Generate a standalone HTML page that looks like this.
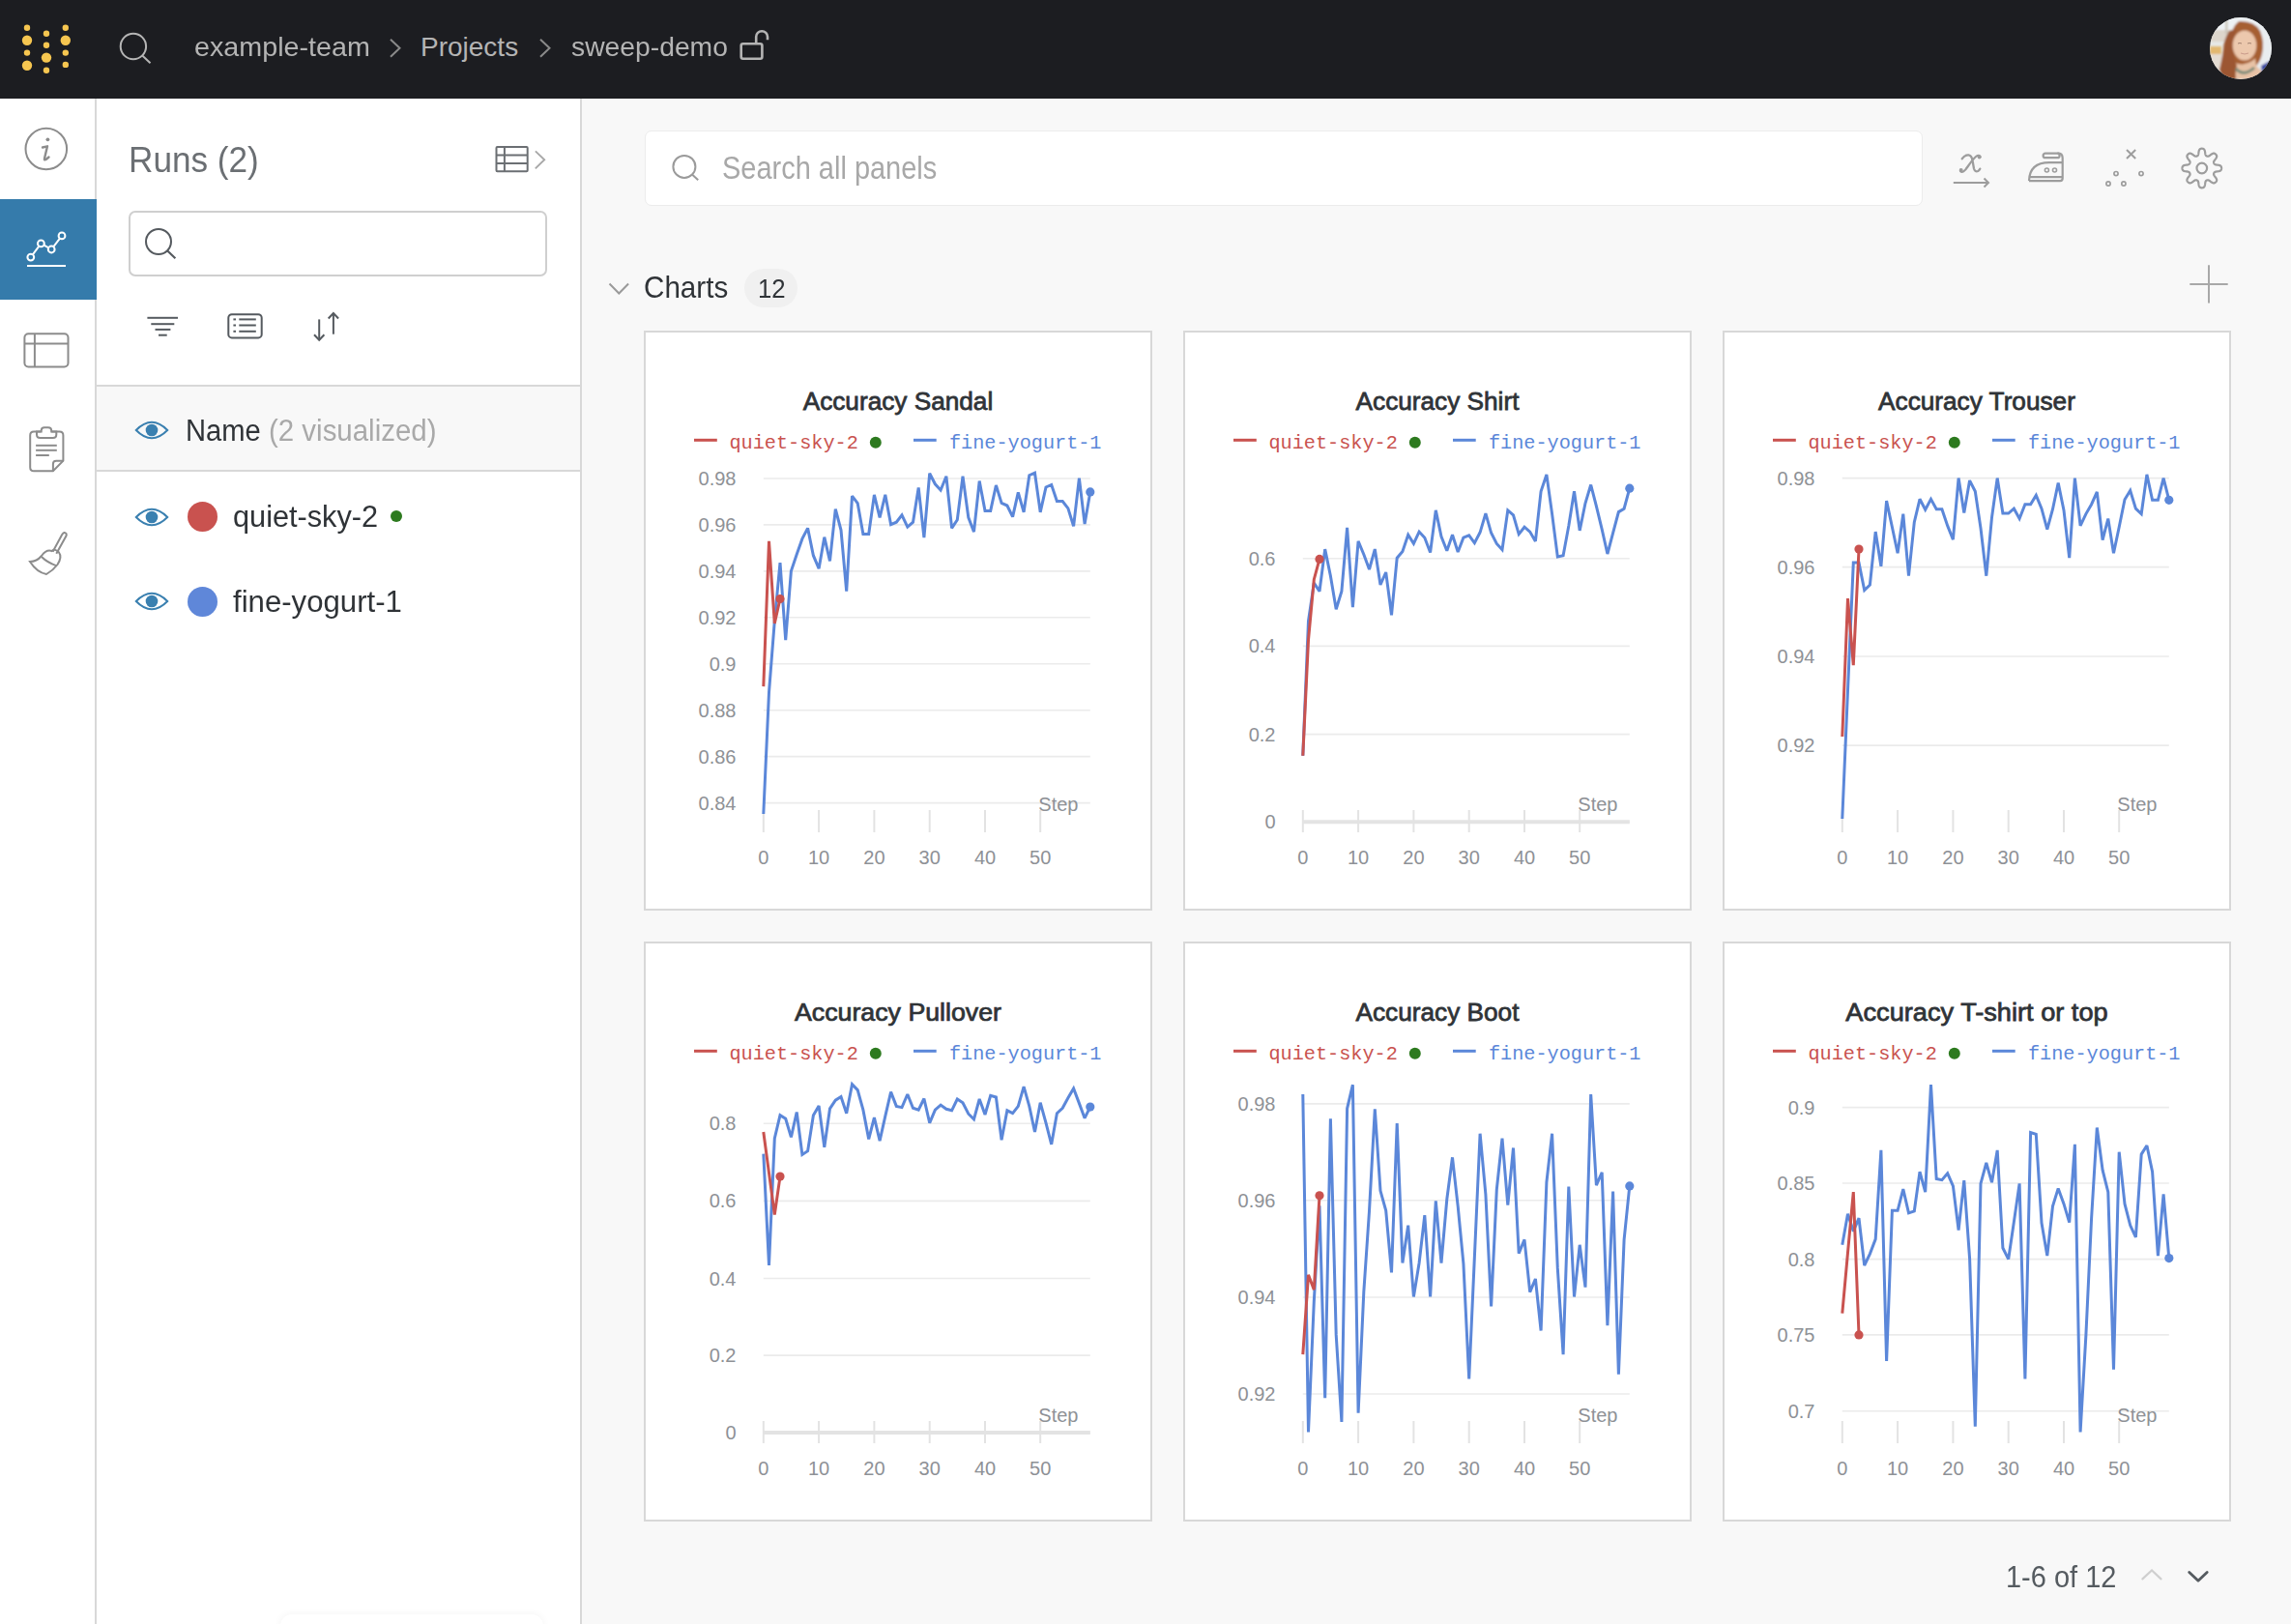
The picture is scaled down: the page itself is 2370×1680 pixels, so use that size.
<!DOCTYPE html>
<html><head><meta charset="utf-8"><style>
html,body{margin:0;padding:0;}
body{width:2370px;height:1680px;position:relative;overflow:hidden;background:#f8f8f8;font-family:"Liberation Sans", sans-serif;}
</style></head><body>
<div style="position:absolute;left:0;top:0;width:2370px;height:102px;background:#1c1d21"></div>
<svg style="position:absolute;left:0;top:0" width="100" height="102"><circle cx="28" cy="28.8" r="3.2" fill="#f6c650"/><circle cx="28" cy="41.8" r="5.2" fill="#f6c650"/><circle cx="28" cy="54.6" r="3.2" fill="#f6c650"/><circle cx="28" cy="67.8" r="5.2" fill="#f6c650"/><circle cx="48" cy="34.8" r="3.2" fill="#f6c650"/><circle cx="48" cy="46.7" r="3.2" fill="#f6c650"/><circle cx="48" cy="59.6" r="5.2" fill="#f6c650"/><circle cx="48" cy="72.8" r="3.2" fill="#f6c650"/><circle cx="67.8" cy="28.8" r="3.2" fill="#f6c650"/><circle cx="67.8" cy="41.8" r="5.2" fill="#f6c650"/><circle cx="67.8" cy="54.6" r="3.2" fill="#f6c650"/><circle cx="67.8" cy="66.9" r="3.2" fill="#f6c650"/></svg>
<svg style="position:absolute;left:110px;top:20px" width="60" height="60"><circle cx="27.9" cy="28" r="13.2" fill="none" stroke="#b5b5b5" stroke-width="2"/><line x1="37.5" y1="37.8" x2="45.5" y2="45.2" stroke="#b5b5b5" stroke-width="2"/></svg>
<div style="position:absolute;left:200.5px;top:34.6px;font-family:'Liberation Sans', sans-serif;font-size:28px;line-height:1;color:#b4b4b4;font-weight:400;white-space:pre;transform:scaleX(1.025);transform-origin:left top;">example-team</div>
<svg style="position:absolute;left:400px;top:36px" width="20" height="26"><polyline points="4,4.7 13.5,13.7 4,22.7" fill="none" stroke="#8a8a8a" stroke-width="2"/></svg>
<div style="position:absolute;left:435px;top:34.6px;font-family:'Liberation Sans', sans-serif;font-size:28px;line-height:1;color:#b4b4b4;font-weight:400;white-space:pre;">Projects</div>
<svg style="position:absolute;left:555px;top:36px" width="20" height="26"><polyline points="4,4.7 13.5,13.7 4,22.7" fill="none" stroke="#8a8a8a" stroke-width="2"/></svg>
<div style="position:absolute;left:590.5px;top:34.6px;font-family:'Liberation Sans', sans-serif;font-size:28px;line-height:1;color:#b4b4b4;font-weight:400;white-space:pre;transform:scaleX(1.01);transform-origin:left top;">sweep-demo</div>
<svg style="position:absolute;left:760px;top:28px" width="40" height="40"><rect x="6.7" y="17.3" width="21.7" height="15.4" rx="2" fill="none" stroke="#b4b4b4" stroke-width="2.6"/><path d="M22.2 17.3 V10.1 A5.9 5.9 0 0 1 34 10.1 V13.2" fill="none" stroke="#b4b4b4" stroke-width="2.6"/></svg>
<svg style="position:absolute;left:2286px;top:18px" width="64" height="64"><defs><clipPath id="avc"><circle cx="32" cy="32" r="32"/></clipPath><filter id="avb" x="-20%" y="-20%" width="140%" height="140%"><feGaussianBlur stdDeviation="1"/></filter></defs><g clip-path="url(#avc)"><rect width="64" height="64" fill="#e6e8e6"/><g filter="url(#avb)"><rect x="0" y="0" width="64" height="18" fill="#eef2f5"/><rect x="0" y="13" width="22" height="12" fill="#ddd6cc"/><rect x="0" y="30" width="12" height="8" fill="#e2b870"/><rect x="0" y="38" width="16" height="26" fill="#e4dcd2"/><rect x="48" y="8" width="16" height="50" fill="#e9edf0"/><rect x="16" y="3" width="2.5" height="14" fill="#c9c3b8"/><path d="M30 4 Q46 3 52 14 Q57 26 54 38 Q52 46 48 50 L40 52 L24 52 Q18 40 20 28 Q22 10 30 4 Z" fill="#a65f33"/><path d="M22 44 Q30 50 36 48 Q44 46 47 42 L48 50 Q54 56 58 60 L58 64 L22 64 Z" fill="#e8c2a6"/><path d="M20 14 Q14 24 14 34 Q12 46 10 54 Q12 62 18 64 L27 64 Q26 56 28 50 Q24 40 24 30 Q24 20 28 12 Z" fill="#9c5630"/><ellipse cx="36" cy="29" rx="12.3" ry="15.5" fill="#ecc8ad"/><path d="M27 53 Q35 62 46 52" fill="none" stroke="#7a8a78" stroke-width="3"/><path d="M53 50 L64 44 L64 64 L55 64 Z" fill="#3a4aa0"/></g><path d="M29 27 Q31 26 33 27 M39 27 Q41 26 43 27" stroke="#9a7a6a" stroke-width="0.9" fill="none"/><path d="M32 37 Q36 39 40 37" stroke="#c99a8a" stroke-width="1" fill="none"/></g></svg>
<div style="position:absolute;left:0;top:102px;width:98px;height:1578px;background:#fff;border-right:2px solid #d8d8d8"></div>
<div style="position:absolute;left:0;top:206px;width:100px;height:104px;background:#357bab"></div>
<svg style="position:absolute;left:0;top:102px" width="98" height="104"><circle cx="47.8" cy="52" r="21.3" fill="none" stroke="#8c8c8c" stroke-width="2"/><circle cx="49.4" cy="42.3" r="1.9" fill="#8c8c8c"/><path d="M44 50.5 L49 49.3 L46 62 Q45.5 64.2 47.8 62.8 L50.5 60.5" fill="none" stroke="#8c8c8c" stroke-width="2.4" stroke-linejoin="round" stroke-linecap="round"/></svg>
<svg style="position:absolute;left:0;top:206px" width="100" height="104"><polyline points="31.8,60.1 42.4,45.9 53.2,52 64,37.9" fill="none" stroke="#fff" stroke-width="2"/><circle cx="31.8" cy="60.1" r="3.4" fill="#357bab" stroke="#fff" stroke-width="2"/><circle cx="42.4" cy="45.9" r="3.4" fill="#357bab" stroke="#fff" stroke-width="2"/><circle cx="53.2" cy="52" r="3.4" fill="#357bab" stroke="#fff" stroke-width="2"/><circle cx="64" cy="37.9" r="3.4" fill="#357bab" stroke="#fff" stroke-width="2"/><line x1="28" y1="69" x2="68" y2="69" stroke="#fff" stroke-width="2"/></svg>
<svg style="position:absolute;left:0;top:330px" width="98" height="70"><rect x="25.4" y="15.2" width="45.1" height="34.2" rx="4" fill="none" stroke="#8c8c8c" stroke-width="2"/><line x1="25.4" y1="25.5" x2="70.5" y2="25.5" stroke="#8c8c8c" stroke-width="2"/><line x1="35.9" y1="15.2" x2="35.9" y2="49.4" stroke="#8c8c8c" stroke-width="2"/></svg>
<svg style="position:absolute;left:0;top:430px" width="98" height="70"><path d="M42.5 16.6 H35 Q31.2 16.6 31.2 20.4 V53.4 Q31.2 57.2 35 57.2 H54.9 L65.4 46.7 V20.4 Q65.4 16.6 61.6 16.6 H53.2" fill="none" stroke="#8c8c8c" stroke-width="2"/><path d="M38 16.6 V19.5 Q38 23 41.5 23 H54.8 Q58.3 23 58.3 19.5 V16.6 H53.2 V15.5 Q53.2 12.2 49.9 12.2 H46 Q42.7 12.2 42.7 15.5 V16.6 Z" fill="none" stroke="#8c8c8c" stroke-width="2"/><line x1="37.1" y1="30.8" x2="58.8" y2="30.8" stroke="#8c8c8c" stroke-width="2"/><line x1="37.1" y1="35.8" x2="58.8" y2="35.8" stroke="#8c8c8c" stroke-width="2"/><line x1="37.1" y1="41" x2="50.8" y2="41" stroke="#8c8c8c" stroke-width="2"/><path d="M54.9 57.2 V50 Q54.9 46.7 58.2 46.7 H65.4" fill="none" stroke="#8c8c8c" stroke-width="2"/></svg>
<svg style="position:absolute;left:0;top:522px" width="98" height="80"><path d="M54.6 48.8 L64.2 31 Q66.5 27.6 68.6 30.2 Q69 31.5 68.4 32.6 L58.3 50.8" fill="none" stroke="#8c8c8c" stroke-width="2"/><path d="M53.7 48 Q57 45 61 49.5 Q64.5 54 59.5 62 Q55 68 48 72 Q38 70 31 59 Q38 59 43 53 Q48 46 53.7 48 Z" fill="none" stroke="#8c8c8c" stroke-width="2"/><path d="M43 54 Q49 60 58.8 63.4" fill="none" stroke="#8c8c8c" stroke-width="2"/></svg>
<div style="position:absolute;left:100px;top:102px;width:500px;height:1578px;background:#fff;border-right:2px solid #d8d8d8"></div>
<div style="position:absolute;left:132.5px;top:147.2px;font-family:'Liberation Sans', sans-serif;font-size:37px;line-height:1;color:#6b6f73;font-weight:400;white-space:pre;transform:scaleX(0.95);transform-origin:left top;">Runs (2)</div>
<svg style="position:absolute;left:505px;top:145px" width="70" height="40"><rect x="8.5" y="7.1" width="32.2" height="25.2" rx="1" fill="none" stroke="#6b6f73" stroke-width="2"/><line x1="8.5" y1="15.4" x2="40.7" y2="15.4" stroke="#6b6f73" stroke-width="2"/><line x1="8.5" y1="24.1" x2="40.7" y2="24.1" stroke="#6b6f73" stroke-width="2"/><line x1="16.9" y1="7.1" x2="16.9" y2="32.3" stroke="#6b6f73" stroke-width="2"/><polyline points="48.9,11.4 58.2,20.3 48.8,29.4" fill="none" stroke="#a8a8a8" stroke-width="1.9"/></svg>
<div style="position:absolute;left:132.5px;top:218px;width:429px;height:63.5px;border:2px solid #cfcfcf;border-radius:7px;background:#fff"></div>
<svg style="position:absolute;left:140px;top:225px" width="60" height="60"><circle cx="24" cy="25" r="13" fill="none" stroke="#555a5f" stroke-width="2"/><line x1="33.3" y1="34.5" x2="41.4" y2="42.3" stroke="#555a5f" stroke-width="2.2"/></svg>
<svg style="position:absolute;left:140px;top:315px" width="60" height="40"><line x1="12.4" y1="13.8" x2="44" y2="13.8" stroke="#555a5f" stroke-width="2"/><line x1="16.3" y1="20.2" x2="40.3" y2="20.2" stroke="#555a5f" stroke-width="2"/><line x1="20.5" y1="25.9" x2="36.4" y2="25.9" stroke="#555a5f" stroke-width="2"/><line x1="24" y1="31.7" x2="32.7" y2="31.7" stroke="#555a5f" stroke-width="2"/></svg>
<svg style="position:absolute;left:225px;top:315px" width="60" height="40"><rect x="11.3" y="10.3" width="34.4" height="24.1" rx="3.5" fill="none" stroke="#555a5f" stroke-width="2"/><line x1="16.4" y1="15.4" x2="19" y2="15.4" stroke="#555a5f" stroke-width="2"/><line x1="22.3" y1="15.4" x2="39.8" y2="15.4" stroke="#555a5f" stroke-width="2"/><line x1="16.4" y1="21.5" x2="19" y2="21.5" stroke="#555a5f" stroke-width="2"/><line x1="22.3" y1="21.5" x2="39.8" y2="21.5" stroke="#555a5f" stroke-width="2"/><line x1="16.4" y1="27.8" x2="19" y2="27.8" stroke="#555a5f" stroke-width="2"/><line x1="22.3" y1="27.8" x2="39.8" y2="27.8" stroke="#555a5f" stroke-width="2"/></svg>
<svg style="position:absolute;left:310px;top:315px" width="50" height="45"><line x1="20.2" y1="15.4" x2="20.2" y2="36.5" stroke="#555a5f" stroke-width="2"/><polyline points="15,31.3 20.2,36.8 25.4,31.3" fill="none" stroke="#555a5f" stroke-width="2"/><line x1="34.9" y1="9.3" x2="34.9" y2="30.7" stroke="#555a5f" stroke-width="2"/><polyline points="29.7,14.5 34.9,9 40.1,14.5" fill="none" stroke="#555a5f" stroke-width="2"/></svg>
<div style="position:absolute;left:100px;top:398px;width:500px;height:86px;background:#f8f8f8;border-top:2px solid #d8d8d8;border-bottom:2px solid #d8d8d8"></div>
<svg style="position:absolute;left:137.2px;top:430.8px" width="40" height="28"><path d="M3.8 14 Q20 -2.5 36.2 14 Q20 30.5 3.8 14 Z" fill="none" stroke="#3a80b0" stroke-width="2"/><circle cx="20" cy="14" r="6.3" fill="#3a80b0"/></svg>
<div style="position:absolute;left:192px;top:430.1px;font-family:'Liberation Sans', sans-serif;font-size:31px;line-height:1;color:#2f3337;font-weight:400;white-space:pre;transform:scaleX(0.94);transform-origin:left top;">Name</div>
<div style="position:absolute;left:278px;top:430.1px;font-family:'Liberation Sans', sans-serif;font-size:31px;line-height:1;color:#a9a9a9;font-weight:400;white-space:pre;transform:scaleX(0.95);transform-origin:left top;">(2 visualized)</div>
<svg style="position:absolute;left:137.2px;top:520.5px" width="40" height="28"><path d="M3.8 14 Q20 -2.5 36.2 14 Q20 30.5 3.8 14 Z" fill="none" stroke="#3a80b0" stroke-width="2"/><circle cx="20" cy="14" r="6.3" fill="#3a80b0"/></svg>
<div style="position:absolute;left:194px;top:518.5px;width:31px;height:31px;border-radius:50%;background:#c9524f"></div>
<div style="position:absolute;left:241px;top:519.3px;font-family:'Liberation Sans', sans-serif;font-size:31px;line-height:1;color:#2f3337;font-weight:400;white-space:pre;transform:scaleX(0.99);transform-origin:left top;">quiet-sky-2</div>
<div style="position:absolute;left:404px;top:528px;width:12px;height:12px;border-radius:50%;background:#2d7a1f"></div>
<svg style="position:absolute;left:137.2px;top:608.3px" width="40" height="28"><path d="M3.8 14 Q20 -2.5 36.2 14 Q20 30.5 3.8 14 Z" fill="none" stroke="#3a80b0" stroke-width="2"/><circle cx="20" cy="14" r="6.3" fill="#3a80b0"/></svg>
<div style="position:absolute;left:194px;top:606.5px;width:31px;height:31px;border-radius:50%;background:#5f87d9"></div>
<div style="position:absolute;left:241px;top:607.1px;font-family:'Liberation Sans', sans-serif;font-size:31px;line-height:1;color:#2f3337;font-weight:400;white-space:pre;transform:scaleX(1.005);transform-origin:left top;">fine-yogurt-1</div>
<div style="position:absolute;left:290px;top:1670px;width:272px;height:40px;border-radius:12px;background:#fff;box-shadow:0 0 8px rgba(0,0,0,0.05)"></div>
<div style="position:absolute;left:667px;top:135px;width:1320px;height:76px;border:1px solid #ececec;border-radius:7px;background:#fff"></div>
<svg style="position:absolute;left:680px;top:145px" width="60" height="60"><circle cx="27.9" cy="27.4" r="11.5" fill="none" stroke="#9a9a9a" stroke-width="2"/><line x1="36" y1="35.6" x2="42.2" y2="41.2" stroke="#9a9a9a" stroke-width="2"/></svg>
<div style="position:absolute;left:747px;top:156.7px;font-family:'Liberation Sans', sans-serif;font-size:33px;line-height:1;color:#a8a8a8;font-weight:400;white-space:pre;transform:scaleX(0.878);transform-origin:left top;">Search all panels</div>
<svg style="position:absolute;left:2010px;top:145px" width="60" height="55"><path d="M19.8 19.2 Q22.5 15 26.5 15.3 Q29.8 15.8 30.6 21.5 L32 29.5 Q33.2 33.2 36.2 32 Q37.6 31.2 38.3 29.6" fill="none" stroke="#9d9d9d" stroke-width="2.3" stroke-linecap="round"/><path d="M38.6 17.4 Q38 15.2 35.6 16 Q32.6 17.2 25.5 27.5 Q22 32.6 19.8 32.8 Q17.6 32.8 18 30.6" fill="none" stroke="#9d9d9d" stroke-width="2.3" stroke-linecap="round"/><circle cx="37.6" cy="17.6" r="1.9" fill="#9d9d9d"/><circle cx="18.8" cy="31" r="1.9" fill="#9d9d9d"/><line x1="10.8" y1="44" x2="47" y2="44" stroke="#9d9d9d" stroke-width="2"/><polyline points="42.5,39.5 47,44 42.5,48.5" fill="none" stroke="#9d9d9d" stroke-width="2"/></svg>
<svg style="position:absolute;left:2090px;top:150px" width="60" height="45"><path d="M9 37.1 Q9.5 18.2 30 18.2 H43.7" fill="none" stroke="#9d9d9d" stroke-width="2.2"/><path d="M9 37.1 H41.2 Q43.7 37.1 43.7 34.6 V13.5 Q43.7 8.3 38.5 8.3" fill="none" stroke="#9d9d9d" stroke-width="2.2"/><line x1="10" y1="33.2" x2="43.7" y2="33.2" stroke="#9d9d9d" stroke-width="2.2"/><rect x="23.6" y="8.6" width="17" height="4.6" rx="2.3" fill="none" stroke="#9d9d9d" stroke-width="2.2"/><circle cx="27.4" cy="26" r="2" fill="none" stroke="#9d9d9d" stroke-width="1.6"/><circle cx="35.5" cy="26" r="2" fill="none" stroke="#9d9d9d" stroke-width="1.6"/></svg>
<svg style="position:absolute;left:2170px;top:145px" width="60" height="55"><line x1="30" y1="10" x2="39.2" y2="19" stroke="#9d9d9d" stroke-width="2"/><line x1="39.2" y1="10" x2="30" y2="19" stroke="#9d9d9d" stroke-width="2"/><circle cx="11" cy="45" r="2.1" fill="none" stroke="#9d9d9d" stroke-width="1.7"/><circle cx="19" cy="34.6" r="2.1" fill="none" stroke="#9d9d9d" stroke-width="1.7"/><circle cx="26.9" cy="45" r="2.1" fill="none" stroke="#9d9d9d" stroke-width="1.7"/><circle cx="45" cy="34.6" r="2.1" fill="none" stroke="#9d9d9d" stroke-width="1.7"/></svg>
<svg style="position:absolute;left:2250px;top:145px" width="60" height="60"><path d="M27.80 8.70 L28.12 8.71 L28.44 8.74 L28.75 8.79 L29.07 8.87 L29.37 8.99 L29.68 9.15 L29.97 9.38 L30.24 9.69 L30.49 10.11 L30.71 10.64 L30.89 11.29 L31.04 12.04 L31.15 12.81 L31.25 13.56 L31.35 14.21 L31.46 14.75 L31.58 15.17 L31.72 15.50 L31.88 15.75 L32.04 15.95 L32.22 16.10 L32.40 16.23 L32.58 16.34 L32.77 16.44 L32.97 16.53 L33.16 16.60 L33.37 16.67 L33.58 16.72 L33.80 16.76 L34.03 16.77 L34.29 16.75 L34.57 16.68 L34.90 16.55 L35.29 16.33 L35.75 16.03 L36.28 15.64 L36.88 15.18 L37.51 14.72 L38.14 14.29 L38.73 13.96 L39.26 13.74 L39.73 13.62 L40.14 13.59 L40.51 13.64 L40.84 13.74 L41.14 13.87 L41.42 14.04 L41.68 14.22 L41.92 14.43 L42.15 14.65 L42.37 14.88 L42.58 15.12 L42.76 15.38 L42.93 15.66 L43.06 15.96 L43.16 16.29 L43.21 16.66 L43.18 17.07 L43.06 17.54 L42.84 18.07 L42.51 18.66 L42.08 19.29 L41.62 19.92 L41.16 20.52 L40.77 21.05 L40.47 21.51 L40.25 21.90 L40.12 22.23 L40.05 22.51 L40.03 22.77 L40.04 23.00 L40.08 23.22 L40.13 23.43 L40.20 23.64 L40.27 23.83 L40.36 24.03 L40.46 24.22 L40.57 24.40 L40.70 24.58 L40.85 24.76 L41.05 24.92 L41.30 25.08 L41.63 25.22 L42.05 25.34 L42.59 25.45 L43.24 25.55 L43.99 25.65 L44.76 25.76 L45.51 25.91 L46.16 26.09 L46.69 26.31 L47.11 26.56 L47.42 26.83 L47.65 27.12 L47.81 27.43 L47.93 27.73 L48.01 28.05 L48.06 28.36 L48.09 28.68 L48.10 29.00 L48.09 29.32 L48.06 29.64 L48.01 29.95 L47.93 30.27 L47.81 30.57 L47.65 30.88 L47.42 31.17 L47.11 31.44 L46.69 31.69 L46.16 31.91 L45.51 32.09 L44.76 32.24 L43.99 32.35 L43.24 32.45 L42.59 32.55 L42.05 32.66 L41.63 32.78 L41.30 32.92 L41.05 33.08 L40.85 33.24 L40.70 33.42 L40.57 33.60 L40.46 33.78 L40.36 33.97 L40.27 34.17 L40.20 34.36 L40.13 34.57 L40.08 34.78 L40.04 35.00 L40.03 35.23 L40.05 35.49 L40.12 35.77 L40.25 36.10 L40.47 36.49 L40.77 36.95 L41.16 37.48 L41.62 38.08 L42.08 38.71 L42.51 39.34 L42.84 39.93 L43.06 40.46 L43.18 40.93 L43.21 41.34 L43.16 41.71 L43.06 42.04 L42.93 42.34 L42.76 42.62 L42.58 42.88 L42.37 43.12 L42.15 43.35 L41.92 43.57 L41.68 43.78 L41.42 43.96 L41.14 44.13 L40.84 44.26 L40.51 44.36 L40.14 44.41 L39.73 44.38 L39.26 44.26 L38.73 44.04 L38.14 43.71 L37.51 43.28 L36.88 42.82 L36.28 42.36 L35.75 41.97 L35.29 41.67 L34.90 41.45 L34.57 41.32 L34.29 41.25 L34.03 41.23 L33.80 41.24 L33.58 41.28 L33.37 41.33 L33.16 41.40 L32.97 41.47 L32.77 41.56 L32.58 41.66 L32.40 41.77 L32.22 41.90 L32.04 42.05 L31.88 42.25 L31.72 42.50 L31.58 42.83 L31.46 43.25 L31.35 43.79 L31.25 44.44 L31.15 45.19 L31.04 45.96 L30.89 46.71 L30.71 47.36 L30.49 47.89 L30.24 48.31 L29.97 48.62 L29.68 48.85 L29.37 49.01 L29.07 49.13 L28.75 49.21 L28.44 49.26 L28.12 49.29 L27.80 49.30 L27.48 49.29 L27.16 49.26 L26.85 49.21 L26.53 49.13 L26.23 49.01 L25.92 48.85 L25.63 48.62 L25.36 48.31 L25.11 47.89 L24.89 47.36 L24.71 46.71 L24.56 45.96 L24.45 45.19 L24.35 44.44 L24.25 43.79 L24.14 43.25 L24.02 42.83 L23.88 42.50 L23.72 42.25 L23.56 42.05 L23.38 41.90 L23.20 41.77 L23.02 41.66 L22.83 41.56 L22.63 41.47 L22.44 41.40 L22.23 41.33 L22.02 41.28 L21.80 41.24 L21.57 41.23 L21.31 41.25 L21.03 41.32 L20.70 41.45 L20.31 41.67 L19.85 41.97 L19.32 42.36 L18.72 42.82 L18.09 43.28 L17.46 43.71 L16.87 44.04 L16.34 44.26 L15.87 44.38 L15.46 44.41 L15.09 44.36 L14.76 44.26 L14.46 44.13 L14.18 43.96 L13.92 43.78 L13.68 43.57 L13.45 43.35 L13.23 43.12 L13.02 42.88 L12.84 42.62 L12.67 42.34 L12.54 42.04 L12.44 41.71 L12.39 41.34 L12.42 40.93 L12.54 40.46 L12.76 39.93 L13.09 39.34 L13.52 38.71 L13.98 38.08 L14.44 37.48 L14.83 36.95 L15.13 36.49 L15.35 36.10 L15.48 35.77 L15.55 35.49 L15.57 35.23 L15.56 35.00 L15.52 34.78 L15.47 34.57 L15.40 34.36 L15.33 34.17 L15.24 33.97 L15.14 33.78 L15.03 33.60 L14.90 33.42 L14.75 33.24 L14.55 33.08 L14.30 32.92 L13.97 32.78 L13.55 32.66 L13.01 32.55 L12.36 32.45 L11.61 32.35 L10.84 32.24 L10.09 32.09 L9.44 31.91 L8.91 31.69 L8.49 31.44 L8.18 31.17 L7.95 30.88 L7.79 30.57 L7.67 30.27 L7.59 29.95 L7.54 29.64 L7.51 29.32 L7.50 29.00 L7.51 28.68 L7.54 28.36 L7.59 28.05 L7.67 27.73 L7.79 27.43 L7.95 27.12 L8.18 26.83 L8.49 26.56 L8.91 26.31 L9.44 26.09 L10.09 25.91 L10.84 25.76 L11.61 25.65 L12.36 25.55 L13.01 25.45 L13.55 25.34 L13.97 25.22 L14.30 25.08 L14.55 24.92 L14.75 24.76 L14.90 24.58 L15.03 24.40 L15.14 24.22 L15.24 24.03 L15.33 23.83 L15.40 23.64 L15.47 23.43 L15.52 23.22 L15.56 23.00 L15.57 22.77 L15.55 22.51 L15.48 22.23 L15.35 21.90 L15.13 21.51 L14.83 21.05 L14.44 20.52 L13.98 19.92 L13.52 19.29 L13.09 18.66 L12.76 18.07 L12.54 17.54 L12.42 17.07 L12.39 16.66 L12.44 16.29 L12.54 15.96 L12.67 15.66 L12.84 15.38 L13.02 15.12 L13.23 14.88 L13.45 14.65 L13.68 14.43 L13.92 14.22 L14.18 14.04 L14.46 13.87 L14.76 13.74 L15.09 13.64 L15.46 13.59 L15.87 13.62 L16.34 13.74 L16.87 13.96 L17.46 14.29 L18.09 14.72 L18.72 15.18 L19.32 15.64 L19.85 16.03 L20.31 16.33 L20.70 16.55 L21.03 16.68 L21.31 16.75 L21.57 16.77 L21.80 16.76 L22.02 16.72 L22.23 16.67 L22.44 16.60 L22.63 16.53 L22.83 16.44 L23.02 16.34 L23.20 16.23 L23.38 16.10 L23.56 15.95 L23.72 15.75 L23.88 15.50 L24.02 15.17 L24.14 14.75 L24.25 14.21 L24.35 13.56 L24.45 12.81 L24.56 12.04 L24.71 11.29 L24.89 10.64 L25.11 10.11 L25.36 9.69 L25.63 9.38 L25.92 9.15 L26.23 8.99 L26.53 8.87 L26.85 8.79 L27.16 8.74 L27.48 8.71 Z" fill="none" stroke="#9d9d9d" stroke-width="2.2" stroke-linejoin="round"/><circle cx="27.800000000000182" cy="29" r="5.3" fill="none" stroke="#9d9d9d" stroke-width="2.2"/></svg>
<svg style="position:absolute;left:625px;top:285px" width="30" height="30"><polyline points="5.5,8.5 15.3,18.5 25.1,8.5" fill="none" stroke="#9a9a9a" stroke-width="2"/></svg>
<div style="position:absolute;left:666px;top:280.9px;font-family:'Liberation Sans', sans-serif;font-size:32px;line-height:1;color:#2f3337;font-weight:400;white-space:pre;transform:scaleX(0.925);transform-origin:left top;">Charts</div>
<div style="position:absolute;left:770px;top:278px;width:55px;height:40px;border-radius:20px;background:#f0f0f0"></div>
<div style="position:absolute;left:784px;top:285.3px;font-family:'Liberation Sans', sans-serif;font-size:28px;line-height:1;color:#2f3337;font-weight:400;white-space:pre;transform:scaleX(0.92);transform-origin:left top;">12</div>
<svg style="position:absolute;left:2260px;top:270px" width="50" height="50"><line x1="5.3" y1="24" x2="44.7" y2="24" stroke="#a8a8a8" stroke-width="2"/><line x1="25" y1="4.3" x2="25" y2="43.4" stroke="#a8a8a8" stroke-width="2"/></svg>
<div style="position:absolute;left:2075px;top:1616.4px;font-family:'Liberation Sans', sans-serif;font-size:30.5px;line-height:1;color:#555b60;font-weight:400;white-space:pre;transform:scaleX(0.95);transform-origin:left top;">1-6 of 12</div>
<svg style="position:absolute;left:2205px;top:1610px" width="100" height="40"><polyline points="11.4,23.4 21,14.4 30.5,23.4" fill="none" stroke="#cfcfcf" stroke-width="2.2" stroke-linecap="round"/><polyline points="59.7,16.4 69,25.3 78.2,16.4" fill="none" stroke="#555b60" stroke-width="2.8" stroke-linecap="round" stroke-linejoin="round"/></svg>
<div style="position:absolute;left:666px;top:342px;width:522px;height:596px;border:2px solid #d8d8d8;background:#fff"></div>
<svg style="position:absolute;left:666px;top:342px" width="526" height="600"><text x="263" y="81.8" text-anchor="middle" font-family="Liberation Sans" font-weight="400" font-size="25.7" fill="#2f3337" stroke="#2f3337" stroke-width="0.75" transform="translate(263 0) scale(1.02 1) translate(-263 0)">Accuracy Sandal</text><line x1="52" y1="113.3" x2="75.8" y2="113.3" stroke="#c9524f" stroke-width="3"/><text x="88.5" y="121.9" font-family="Liberation Mono" font-size="20.2" fill="#c9524f">quiet-sky-2</text><circle cx="239.8" cy="115.7" r="6" fill="#2d7a1f"/><line x1="279" y1="113.3" x2="302.7" y2="113.3" stroke="#5b87d9" stroke-width="3"/><text x="316" y="121.9" font-family="Liberation Mono" font-size="20.2" fill="#5b87d9">fine-yogurt-1</text><line x1="123.8" y1="153" x2="461.8" y2="153" stroke="#ebebeb" stroke-width="1.6"/><text x="95.5" y="160" text-anchor="end" font-family="Liberation Sans" font-size="20" fill="#8e9196">0.98</text><line x1="123.8" y1="200.9" x2="461.8" y2="200.9" stroke="#ebebeb" stroke-width="1.6"/><text x="95.5" y="207.9" text-anchor="end" font-family="Liberation Sans" font-size="20" fill="#8e9196">0.96</text><line x1="123.8" y1="248.9" x2="461.8" y2="248.9" stroke="#ebebeb" stroke-width="1.6"/><text x="95.5" y="255.9" text-anchor="end" font-family="Liberation Sans" font-size="20" fill="#8e9196">0.94</text><line x1="123.8" y1="296.8" x2="461.8" y2="296.8" stroke="#ebebeb" stroke-width="1.6"/><text x="95.5" y="303.8" text-anchor="end" font-family="Liberation Sans" font-size="20" fill="#8e9196">0.92</text><line x1="123.8" y1="344.8" x2="461.8" y2="344.8" stroke="#ebebeb" stroke-width="1.6"/><text x="95.5" y="351.8" text-anchor="end" font-family="Liberation Sans" font-size="20" fill="#8e9196">0.9</text><line x1="123.8" y1="392.7" x2="461.8" y2="392.7" stroke="#ebebeb" stroke-width="1.6"/><text x="95.5" y="399.7" text-anchor="end" font-family="Liberation Sans" font-size="20" fill="#8e9196">0.88</text><line x1="123.8" y1="440.6" x2="461.8" y2="440.6" stroke="#ebebeb" stroke-width="1.6"/><text x="95.5" y="447.6" text-anchor="end" font-family="Liberation Sans" font-size="20" fill="#8e9196">0.86</text><line x1="123.8" y1="488.6" x2="461.8" y2="488.6" stroke="#ebebeb" stroke-width="1.6"/><text x="95.5" y="495.6" text-anchor="end" font-family="Liberation Sans" font-size="20" fill="#8e9196">0.84</text><line x1="123.8" y1="496" x2="123.8" y2="519" stroke="#e3e3e3" stroke-width="2"/><text x="123.8" y="552" text-anchor="middle" font-family="Liberation Sans" font-size="20" fill="#8e9196">0</text><line x1="181.1" y1="496" x2="181.1" y2="519" stroke="#e3e3e3" stroke-width="2"/><text x="181.1" y="552" text-anchor="middle" font-family="Liberation Sans" font-size="20" fill="#8e9196">10</text><line x1="238.4" y1="496" x2="238.4" y2="519" stroke="#e3e3e3" stroke-width="2"/><text x="238.4" y="552" text-anchor="middle" font-family="Liberation Sans" font-size="20" fill="#8e9196">20</text><line x1="295.7" y1="496" x2="295.7" y2="519" stroke="#e3e3e3" stroke-width="2"/><text x="295.7" y="552" text-anchor="middle" font-family="Liberation Sans" font-size="20" fill="#8e9196">30</text><line x1="353.0" y1="496" x2="353.0" y2="519" stroke="#e3e3e3" stroke-width="2"/><text x="353.0" y="552" text-anchor="middle" font-family="Liberation Sans" font-size="20" fill="#8e9196">40</text><line x1="410.2" y1="496" x2="410.2" y2="519" stroke="#e3e3e3" stroke-width="2"/><text x="410.2" y="552" text-anchor="middle" font-family="Liberation Sans" font-size="20" fill="#8e9196">50</text><text x="449.5" y="496.5" text-anchor="end" font-family="Liberation Sans" font-size="20" fill="#8e9196">Step</text><polyline points="123.8,500.0 129.5,374.3 135.3,300.4 141.0,240.1 146.7,320.1 152.4,248.7 158.2,231.4 163.9,215.4 169.6,204.4 175.4,232.7 181.1,246.2 186.8,213.7 192.5,238.3 198.3,184.7 204.0,206.3 209.7,269.6 215.5,171.1 221.2,178.5 226.9,210.5 232.7,210.5 238.4,169.9 244.1,193.3 249.8,169.9 255.6,200.7 261.3,198.2 267.0,190.8 272.8,203.1 278.5,198.2 284.2,162.5 289.9,214.2 295.7,147.7 301.4,158.8 307.1,165.0 312.9,150.7 318.6,204.4 324.3,195.8 330.0,150.7 335.8,193.3 341.5,208.1 347.2,155.6 353.0,186.4 358.7,186.4 364.4,160.0 370.1,178.5 375.9,181.0 381.6,192.6 387.3,167.4 393.1,187.9 398.8,149.7 404.5,147.2 410.2,187.9 416.0,162.0 421.7,159.5 427.4,176.5 433.2,176.5 438.9,183.9 444.6,202.4 450.4,152.6 456.1,200.0 461.8,166.9" fill="none" stroke="#5b87d9" stroke-width="3" stroke-linejoin="miter" stroke-miterlimit="2.5"/><polyline points="123.8,368.1 129.5,217.9 135.3,302.9 141.0,277.5" fill="none" stroke="#c9524f" stroke-width="3" stroke-linejoin="miter" stroke-miterlimit="2.5"/><circle cx="141.0" cy="277.5" r="4.6" fill="#c9524f"/><circle cx="461.8" cy="166.9" r="4.6" fill="#5b87d9"/></svg>
<div style="position:absolute;left:1224px;top:342px;width:522px;height:596px;border:2px solid #d8d8d8;background:#fff"></div>
<svg style="position:absolute;left:1224px;top:342px" width="526" height="600"><text x="263" y="81.8" text-anchor="middle" font-family="Liberation Sans" font-weight="400" font-size="25.7" fill="#2f3337" stroke="#2f3337" stroke-width="0.75" transform="translate(263 0) scale(1.02 1) translate(-263 0)">Accuracy Shirt</text><line x1="52" y1="113.3" x2="75.8" y2="113.3" stroke="#c9524f" stroke-width="3"/><text x="88.5" y="121.9" font-family="Liberation Mono" font-size="20.2" fill="#c9524f">quiet-sky-2</text><circle cx="239.8" cy="115.7" r="6" fill="#2d7a1f"/><line x1="279" y1="113.3" x2="302.7" y2="113.3" stroke="#5b87d9" stroke-width="3"/><text x="316" y="121.9" font-family="Liberation Mono" font-size="20.2" fill="#5b87d9">fine-yogurt-1</text><line x1="123.8" y1="235.7" x2="461.8" y2="235.7" stroke="#ebebeb" stroke-width="1.6"/><text x="95.5" y="242.7" text-anchor="end" font-family="Liberation Sans" font-size="20" fill="#8e9196">0.6</text><line x1="123.8" y1="326.4" x2="461.8" y2="326.4" stroke="#ebebeb" stroke-width="1.6"/><text x="95.5" y="333.4" text-anchor="end" font-family="Liberation Sans" font-size="20" fill="#8e9196">0.4</text><line x1="123.8" y1="417.6" x2="461.8" y2="417.6" stroke="#ebebeb" stroke-width="1.6"/><text x="95.5" y="424.6" text-anchor="end" font-family="Liberation Sans" font-size="20" fill="#8e9196">0.2</text><line x1="123.8" y1="508.2" x2="461.8" y2="508.2" stroke="#ebebeb" stroke-width="1.6"/><text x="95.5" y="515.2" text-anchor="end" font-family="Liberation Sans" font-size="20" fill="#8e9196">0</text><line x1="123.8" y1="508.2" x2="461.8" y2="508.2" stroke="#e3e3e3" stroke-width="4"/><line x1="123.8" y1="496" x2="123.8" y2="519" stroke="#e3e3e3" stroke-width="2"/><text x="123.8" y="552" text-anchor="middle" font-family="Liberation Sans" font-size="20" fill="#8e9196">0</text><line x1="181.1" y1="496" x2="181.1" y2="519" stroke="#e3e3e3" stroke-width="2"/><text x="181.1" y="552" text-anchor="middle" font-family="Liberation Sans" font-size="20" fill="#8e9196">10</text><line x1="238.4" y1="496" x2="238.4" y2="519" stroke="#e3e3e3" stroke-width="2"/><text x="238.4" y="552" text-anchor="middle" font-family="Liberation Sans" font-size="20" fill="#8e9196">20</text><line x1="295.7" y1="496" x2="295.7" y2="519" stroke="#e3e3e3" stroke-width="2"/><text x="295.7" y="552" text-anchor="middle" font-family="Liberation Sans" font-size="20" fill="#8e9196">30</text><line x1="353.0" y1="496" x2="353.0" y2="519" stroke="#e3e3e3" stroke-width="2"/><text x="353.0" y="552" text-anchor="middle" font-family="Liberation Sans" font-size="20" fill="#8e9196">40</text><line x1="410.2" y1="496" x2="410.2" y2="519" stroke="#e3e3e3" stroke-width="2"/><text x="410.2" y="552" text-anchor="middle" font-family="Liberation Sans" font-size="20" fill="#8e9196">50</text><text x="449.5" y="496.5" text-anchor="end" font-family="Liberation Sans" font-size="20" fill="#8e9196">Step</text><polyline points="123.8,439.7 129.5,300.5 135.3,261.1 141.0,269.7 146.7,226.1 152.4,253.7 158.2,288.2 163.9,269.7 169.6,203.9 175.4,286.2 181.1,217.9 186.8,231.5 192.5,247.0 198.3,226.1 204.0,263.0 209.7,250.0 215.5,294.3 221.2,235.2 226.9,228.5 232.7,211.3 238.4,220.4 244.1,208.1 249.8,214.2 255.6,229.5 261.3,185.9 267.0,213.0 272.8,227.8 278.5,211.3 284.2,229.0 289.9,214.2 295.7,211.8 301.4,219.7 307.1,208.8 312.9,189.1 318.6,209.3 324.3,220.4 330.0,226.6 335.8,185.9 341.5,190.8 347.2,210.6 353.0,203.2 358.7,208.1 364.4,217.9 370.1,166.2 375.9,148.9 381.6,189.6 387.3,234.0 393.1,232.7 398.8,201.9 404.5,166.2 410.2,206.9 416.0,178.5 421.7,159.5 427.4,181.7 433.2,205.6 438.9,231.0 444.6,209.3 450.4,187.6 456.1,184.2 461.8,163.2" fill="none" stroke="#5b87d9" stroke-width="3" stroke-linejoin="miter" stroke-miterlimit="2.5"/><polyline points="123.8,439.7 129.5,320.2 135.3,257.4 141.0,236.4" fill="none" stroke="#c9524f" stroke-width="3" stroke-linejoin="miter" stroke-miterlimit="2.5"/><circle cx="141.0" cy="236.4" r="4.6" fill="#c9524f"/><circle cx="461.8" cy="163.2" r="4.6" fill="#5b87d9"/></svg>
<div style="position:absolute;left:1782px;top:342px;width:522px;height:596px;border:2px solid #d8d8d8;background:#fff"></div>
<svg style="position:absolute;left:1782px;top:342px" width="526" height="600"><text x="263" y="81.8" text-anchor="middle" font-family="Liberation Sans" font-weight="400" font-size="25.7" fill="#2f3337" stroke="#2f3337" stroke-width="0.75" transform="translate(263 0) scale(1.02 1) translate(-263 0)">Accuracy Trouser</text><line x1="52" y1="113.3" x2="75.8" y2="113.3" stroke="#c9524f" stroke-width="3"/><text x="88.5" y="121.9" font-family="Liberation Mono" font-size="20.2" fill="#c9524f">quiet-sky-2</text><circle cx="239.8" cy="115.7" r="6" fill="#2d7a1f"/><line x1="279" y1="113.3" x2="302.7" y2="113.3" stroke="#5b87d9" stroke-width="3"/><text x="316" y="121.9" font-family="Liberation Mono" font-size="20.2" fill="#5b87d9">fine-yogurt-1</text><line x1="123.8" y1="152.6" x2="461.8" y2="152.6" stroke="#ebebeb" stroke-width="1.6"/><text x="95.5" y="159.6" text-anchor="end" font-family="Liberation Sans" font-size="20" fill="#8e9196">0.98</text><line x1="123.8" y1="244.6" x2="461.8" y2="244.6" stroke="#ebebeb" stroke-width="1.6"/><text x="95.5" y="251.6" text-anchor="end" font-family="Liberation Sans" font-size="20" fill="#8e9196">0.96</text><line x1="123.8" y1="337" x2="461.8" y2="337" stroke="#ebebeb" stroke-width="1.6"/><text x="95.5" y="344" text-anchor="end" font-family="Liberation Sans" font-size="20" fill="#8e9196">0.94</text><line x1="123.8" y1="429.1" x2="461.8" y2="429.1" stroke="#ebebeb" stroke-width="1.6"/><text x="95.5" y="436.1" text-anchor="end" font-family="Liberation Sans" font-size="20" fill="#8e9196">0.92</text><line x1="123.8" y1="496" x2="123.8" y2="519" stroke="#e3e3e3" stroke-width="2"/><text x="123.8" y="552" text-anchor="middle" font-family="Liberation Sans" font-size="20" fill="#8e9196">0</text><line x1="181.1" y1="496" x2="181.1" y2="519" stroke="#e3e3e3" stroke-width="2"/><text x="181.1" y="552" text-anchor="middle" font-family="Liberation Sans" font-size="20" fill="#8e9196">10</text><line x1="238.4" y1="496" x2="238.4" y2="519" stroke="#e3e3e3" stroke-width="2"/><text x="238.4" y="552" text-anchor="middle" font-family="Liberation Sans" font-size="20" fill="#8e9196">20</text><line x1="295.7" y1="496" x2="295.7" y2="519" stroke="#e3e3e3" stroke-width="2"/><text x="295.7" y="552" text-anchor="middle" font-family="Liberation Sans" font-size="20" fill="#8e9196">30</text><line x1="353.0" y1="496" x2="353.0" y2="519" stroke="#e3e3e3" stroke-width="2"/><text x="353.0" y="552" text-anchor="middle" font-family="Liberation Sans" font-size="20" fill="#8e9196">40</text><line x1="410.2" y1="496" x2="410.2" y2="519" stroke="#e3e3e3" stroke-width="2"/><text x="410.2" y="552" text-anchor="middle" font-family="Liberation Sans" font-size="20" fill="#8e9196">50</text><text x="449.5" y="496.5" text-anchor="end" font-family="Liberation Sans" font-size="20" fill="#8e9196">Step</text><polyline points="123.8,505.0 129.5,372.5 135.3,240.1 141.0,240.1 146.7,268.5 152.4,263.0 158.2,208.1 163.9,243.8 169.6,176.1 175.4,203.2 181.1,230.3 186.8,189.6 192.5,253.7 198.3,198.2 204.0,174.3 209.7,185.2 215.5,174.3 221.2,184.7 226.9,184.7 232.7,201.9 238.4,216.2 244.1,152.6 249.8,188.4 255.6,155.1 261.3,166.2 267.0,204.4 272.8,253.7 278.5,193.3 284.2,152.6 289.9,189.1 295.7,189.1 301.4,184.2 307.1,194.5 312.9,179.7 318.6,179.7 324.3,170.4 330.0,184.2 335.8,205.6 341.5,184.7 347.2,157.6 353.0,185.9 358.7,235.2 364.4,152.6 370.1,201.9 375.9,189.6 381.6,179.7 387.3,166.9 393.1,216.7 398.8,194.5 404.5,230.3 410.2,203.2 416.0,174.8 421.7,165.5 427.4,184.2 433.2,189.6 438.9,148.9 444.6,175.3 450.4,175.3 456.1,152.6 461.8,175.3" fill="none" stroke="#5b87d9" stroke-width="3" stroke-linejoin="miter" stroke-miterlimit="2.5"/><polyline points="123.8,420.0 129.5,277.1 135.3,346.1 141.0,226.1" fill="none" stroke="#c9524f" stroke-width="3" stroke-linejoin="miter" stroke-miterlimit="2.5"/><circle cx="141.0" cy="226.1" r="4.6" fill="#c9524f"/><circle cx="461.8" cy="175.3" r="4.6" fill="#5b87d9"/></svg>
<div style="position:absolute;left:666px;top:974px;width:522px;height:596px;border:2px solid #d8d8d8;background:#fff"></div>
<svg style="position:absolute;left:666px;top:974px" width="526" height="600"><text x="263" y="81.8" text-anchor="middle" font-family="Liberation Sans" font-weight="400" font-size="25.7" fill="#2f3337" stroke="#2f3337" stroke-width="0.75" transform="translate(263 0) scale(1.041 1) translate(-263 0)">Accuracy Pullover</text><line x1="52" y1="113.3" x2="75.8" y2="113.3" stroke="#c9524f" stroke-width="3"/><text x="88.5" y="121.9" font-family="Liberation Mono" font-size="20.2" fill="#c9524f">quiet-sky-2</text><circle cx="239.8" cy="115.7" r="6" fill="#2d7a1f"/><line x1="279" y1="113.3" x2="302.7" y2="113.3" stroke="#5b87d9" stroke-width="3"/><text x="316" y="121.9" font-family="Liberation Mono" font-size="20.2" fill="#5b87d9">fine-yogurt-1</text><line x1="123.8" y1="188.3" x2="461.8" y2="188.3" stroke="#ebebeb" stroke-width="1.6"/><text x="95.5" y="195.3" text-anchor="end" font-family="Liberation Sans" font-size="20" fill="#8e9196">0.8</text><line x1="123.8" y1="268.4" x2="461.8" y2="268.4" stroke="#ebebeb" stroke-width="1.6"/><text x="95.5" y="275.4" text-anchor="end" font-family="Liberation Sans" font-size="20" fill="#8e9196">0.6</text><line x1="123.8" y1="348.5" x2="461.8" y2="348.5" stroke="#ebebeb" stroke-width="1.6"/><text x="95.5" y="355.5" text-anchor="end" font-family="Liberation Sans" font-size="20" fill="#8e9196">0.4</text><line x1="123.8" y1="428.1" x2="461.8" y2="428.1" stroke="#ebebeb" stroke-width="1.6"/><text x="95.5" y="435.1" text-anchor="end" font-family="Liberation Sans" font-size="20" fill="#8e9196">0.2</text><line x1="123.8" y1="508" x2="461.8" y2="508" stroke="#ebebeb" stroke-width="1.6"/><text x="95.5" y="515" text-anchor="end" font-family="Liberation Sans" font-size="20" fill="#8e9196">0</text><line x1="123.8" y1="508" x2="461.8" y2="508" stroke="#e3e3e3" stroke-width="4"/><line x1="123.8" y1="496" x2="123.8" y2="519" stroke="#e3e3e3" stroke-width="2"/><text x="123.8" y="552" text-anchor="middle" font-family="Liberation Sans" font-size="20" fill="#8e9196">0</text><line x1="181.1" y1="496" x2="181.1" y2="519" stroke="#e3e3e3" stroke-width="2"/><text x="181.1" y="552" text-anchor="middle" font-family="Liberation Sans" font-size="20" fill="#8e9196">10</text><line x1="238.4" y1="496" x2="238.4" y2="519" stroke="#e3e3e3" stroke-width="2"/><text x="238.4" y="552" text-anchor="middle" font-family="Liberation Sans" font-size="20" fill="#8e9196">20</text><line x1="295.7" y1="496" x2="295.7" y2="519" stroke="#e3e3e3" stroke-width="2"/><text x="295.7" y="552" text-anchor="middle" font-family="Liberation Sans" font-size="20" fill="#8e9196">30</text><line x1="353.0" y1="496" x2="353.0" y2="519" stroke="#e3e3e3" stroke-width="2"/><text x="353.0" y="552" text-anchor="middle" font-family="Liberation Sans" font-size="20" fill="#8e9196">40</text><line x1="410.2" y1="496" x2="410.2" y2="519" stroke="#e3e3e3" stroke-width="2"/><text x="410.2" y="552" text-anchor="middle" font-family="Liberation Sans" font-size="20" fill="#8e9196">50</text><text x="449.5" y="496.5" text-anchor="end" font-family="Liberation Sans" font-size="20" fill="#8e9196">Step</text><polyline points="123.8,219.6 129.5,335.0 135.3,203.6 141.0,179.7 146.7,183.2 152.4,202.4 158.2,176.5 163.9,220.4 169.6,216.7 175.4,179.7 181.1,169.9 186.8,212.7 192.5,172.8 198.3,164.2 204.0,160.5 209.7,177.7 215.5,147.7 221.2,153.6 226.9,174.1 232.7,204.4 238.4,182.2 244.1,206.1 249.8,180.7 255.6,155.6 261.3,170.4 267.0,171.6 272.8,158.0 278.5,172.3 284.2,174.1 289.9,162.5 295.7,187.6 301.4,174.1 307.1,169.1 312.9,173.3 318.6,174.8 324.3,163.0 330.0,166.7 335.8,178.2 341.5,183.9 347.2,163.0 353.0,179.0 358.7,159.3 364.4,161.0 370.1,205.3 375.9,174.8 381.6,177.7 387.3,170.4 393.1,150.1 398.8,170.4 404.5,197.0 410.2,166.7 416.0,187.6 421.7,209.8 427.4,177.7 433.2,172.3 438.9,161.7 444.6,151.9 450.4,167.4 456.1,182.7 461.8,171.1" fill="none" stroke="#5b87d9" stroke-width="3" stroke-linejoin="miter" stroke-miterlimit="2.5"/><polyline points="123.8,197.0 129.5,239.4 135.3,282.5 141.0,243.1" fill="none" stroke="#c9524f" stroke-width="3" stroke-linejoin="miter" stroke-miterlimit="2.5"/><circle cx="141.0" cy="243.1" r="4.6" fill="#c9524f"/><circle cx="461.8" cy="171.1" r="4.6" fill="#5b87d9"/></svg>
<div style="position:absolute;left:1224px;top:974px;width:522px;height:596px;border:2px solid #d8d8d8;background:#fff"></div>
<svg style="position:absolute;left:1224px;top:974px" width="526" height="600"><text x="263" y="81.8" text-anchor="middle" font-family="Liberation Sans" font-weight="400" font-size="25.7" fill="#2f3337" stroke="#2f3337" stroke-width="0.75" transform="translate(263 0) scale(1.02 1) translate(-263 0)">Accuracy Boot</text><line x1="52" y1="113.3" x2="75.8" y2="113.3" stroke="#c9524f" stroke-width="3"/><text x="88.5" y="121.9" font-family="Liberation Mono" font-size="20.2" fill="#c9524f">quiet-sky-2</text><circle cx="239.8" cy="115.7" r="6" fill="#2d7a1f"/><line x1="279" y1="113.3" x2="302.7" y2="113.3" stroke="#5b87d9" stroke-width="3"/><text x="316" y="121.9" font-family="Liberation Mono" font-size="20.2" fill="#5b87d9">fine-yogurt-1</text><line x1="123.8" y1="167.9" x2="461.8" y2="167.9" stroke="#ebebeb" stroke-width="1.6"/><text x="95.5" y="174.9" text-anchor="end" font-family="Liberation Sans" font-size="20" fill="#8e9196">0.98</text><line x1="123.8" y1="267.7" x2="461.8" y2="267.7" stroke="#ebebeb" stroke-width="1.6"/><text x="95.5" y="274.7" text-anchor="end" font-family="Liberation Sans" font-size="20" fill="#8e9196">0.96</text><line x1="123.8" y1="368" x2="461.8" y2="368" stroke="#ebebeb" stroke-width="1.6"/><text x="95.5" y="375" text-anchor="end" font-family="Liberation Sans" font-size="20" fill="#8e9196">0.94</text><line x1="123.8" y1="468" x2="461.8" y2="468" stroke="#ebebeb" stroke-width="1.6"/><text x="95.5" y="475" text-anchor="end" font-family="Liberation Sans" font-size="20" fill="#8e9196">0.92</text><line x1="123.8" y1="496" x2="123.8" y2="519" stroke="#e3e3e3" stroke-width="2"/><text x="123.8" y="552" text-anchor="middle" font-family="Liberation Sans" font-size="20" fill="#8e9196">0</text><line x1="181.1" y1="496" x2="181.1" y2="519" stroke="#e3e3e3" stroke-width="2"/><text x="181.1" y="552" text-anchor="middle" font-family="Liberation Sans" font-size="20" fill="#8e9196">10</text><line x1="238.4" y1="496" x2="238.4" y2="519" stroke="#e3e3e3" stroke-width="2"/><text x="238.4" y="552" text-anchor="middle" font-family="Liberation Sans" font-size="20" fill="#8e9196">20</text><line x1="295.7" y1="496" x2="295.7" y2="519" stroke="#e3e3e3" stroke-width="2"/><text x="295.7" y="552" text-anchor="middle" font-family="Liberation Sans" font-size="20" fill="#8e9196">30</text><line x1="353.0" y1="496" x2="353.0" y2="519" stroke="#e3e3e3" stroke-width="2"/><text x="353.0" y="552" text-anchor="middle" font-family="Liberation Sans" font-size="20" fill="#8e9196">40</text><line x1="410.2" y1="496" x2="410.2" y2="519" stroke="#e3e3e3" stroke-width="2"/><text x="410.2" y="552" text-anchor="middle" font-family="Liberation Sans" font-size="20" fill="#8e9196">50</text><text x="449.5" y="496.5" text-anchor="end" font-family="Liberation Sans" font-size="20" fill="#8e9196">Step</text><polyline points="123.8,158.0 129.5,507.5 135.3,372.4 141.0,273.4 146.7,472.2 152.4,183.2 158.2,406.9 163.9,496.9 169.6,172.8 175.4,148.2 181.1,487.8 186.8,362.6 192.5,278.8 198.3,173.3 204.0,257.8 209.7,278.3 215.5,342.4 221.2,188.1 226.9,332.5 232.7,293.6 238.4,367.5 244.1,332.5 249.8,283.2 255.6,367.5 261.3,268.4 267.0,332.5 272.8,266.5 278.5,223.3 284.2,273.9 289.9,333.0 295.7,452.5 301.4,325.6 307.1,198.7 312.9,261.5 318.6,377.4 324.3,256.6 330.0,203.6 335.8,272.6 341.5,213.5 347.2,322.6 353.0,308.4 358.7,362.6 364.4,349.0 370.1,402.5 375.9,249.2 381.6,198.7 387.3,337.9 393.1,427.1 398.8,253.6 404.5,367.5 410.2,313.8 416.0,357.6 421.7,158.0 427.4,252.2 433.2,238.9 438.9,397.1 444.6,258.6 450.4,447.6 456.1,308.4 461.8,252.9" fill="none" stroke="#5b87d9" stroke-width="3" stroke-linejoin="miter" stroke-miterlimit="2.5"/><polyline points="123.8,427.1 129.5,344.8 135.3,360.1 141.0,262.8" fill="none" stroke="#c9524f" stroke-width="3" stroke-linejoin="miter" stroke-miterlimit="2.5"/><circle cx="141.0" cy="262.8" r="4.6" fill="#c9524f"/><circle cx="461.8" cy="252.9" r="4.6" fill="#5b87d9"/></svg>
<div style="position:absolute;left:1782px;top:974px;width:522px;height:596px;border:2px solid #d8d8d8;background:#fff"></div>
<svg style="position:absolute;left:1782px;top:974px" width="526" height="600"><text x="263" y="81.8" text-anchor="middle" font-family="Liberation Sans" font-weight="400" font-size="25.7" fill="#2f3337" stroke="#2f3337" stroke-width="0.75" transform="translate(263 0) scale(1.058 1) translate(-263 0)">Accuracy T-shirt or top</text><line x1="52" y1="113.3" x2="75.8" y2="113.3" stroke="#c9524f" stroke-width="3"/><text x="88.5" y="121.9" font-family="Liberation Mono" font-size="20.2" fill="#c9524f">quiet-sky-2</text><circle cx="239.8" cy="115.7" r="6" fill="#2d7a1f"/><line x1="279" y1="113.3" x2="302.7" y2="113.3" stroke="#5b87d9" stroke-width="3"/><text x="316" y="121.9" font-family="Liberation Mono" font-size="20.2" fill="#5b87d9">fine-yogurt-1</text><line x1="123.8" y1="171.6" x2="461.8" y2="171.6" stroke="#ebebeb" stroke-width="1.6"/><text x="95.5" y="178.6" text-anchor="end" font-family="Liberation Sans" font-size="20" fill="#8e9196">0.9</text><line x1="123.8" y1="250" x2="461.8" y2="250" stroke="#ebebeb" stroke-width="1.6"/><text x="95.5" y="257" text-anchor="end" font-family="Liberation Sans" font-size="20" fill="#8e9196">0.85</text><line x1="123.8" y1="328.6" x2="461.8" y2="328.6" stroke="#ebebeb" stroke-width="1.6"/><text x="95.5" y="335.6" text-anchor="end" font-family="Liberation Sans" font-size="20" fill="#8e9196">0.8</text><line x1="123.8" y1="406.9" x2="461.8" y2="406.9" stroke="#ebebeb" stroke-width="1.6"/><text x="95.5" y="413.9" text-anchor="end" font-family="Liberation Sans" font-size="20" fill="#8e9196">0.75</text><line x1="123.8" y1="485.8" x2="461.8" y2="485.8" stroke="#ebebeb" stroke-width="1.6"/><text x="95.5" y="492.8" text-anchor="end" font-family="Liberation Sans" font-size="20" fill="#8e9196">0.7</text><line x1="123.8" y1="496" x2="123.8" y2="519" stroke="#e3e3e3" stroke-width="2"/><text x="123.8" y="552" text-anchor="middle" font-family="Liberation Sans" font-size="20" fill="#8e9196">0</text><line x1="181.1" y1="496" x2="181.1" y2="519" stroke="#e3e3e3" stroke-width="2"/><text x="181.1" y="552" text-anchor="middle" font-family="Liberation Sans" font-size="20" fill="#8e9196">10</text><line x1="238.4" y1="496" x2="238.4" y2="519" stroke="#e3e3e3" stroke-width="2"/><text x="238.4" y="552" text-anchor="middle" font-family="Liberation Sans" font-size="20" fill="#8e9196">20</text><line x1="295.7" y1="496" x2="295.7" y2="519" stroke="#e3e3e3" stroke-width="2"/><text x="295.7" y="552" text-anchor="middle" font-family="Liberation Sans" font-size="20" fill="#8e9196">30</text><line x1="353.0" y1="496" x2="353.0" y2="519" stroke="#e3e3e3" stroke-width="2"/><text x="353.0" y="552" text-anchor="middle" font-family="Liberation Sans" font-size="20" fill="#8e9196">40</text><line x1="410.2" y1="496" x2="410.2" y2="519" stroke="#e3e3e3" stroke-width="2"/><text x="410.2" y="552" text-anchor="middle" font-family="Liberation Sans" font-size="20" fill="#8e9196">50</text><text x="449.5" y="496.5" text-anchor="end" font-family="Liberation Sans" font-size="20" fill="#8e9196">Step</text><polyline points="123.8,313.8 129.5,281.7 135.3,299.7 141.0,286.2 146.7,335.0 152.4,323.1 158.2,307.9 163.9,215.9 169.6,434.0 175.4,278.3 181.1,278.3 186.8,256.1 192.5,280.8 198.3,278.8 204.0,238.1 209.7,259.1 215.5,148.2 221.2,245.5 226.9,246.7 232.7,239.8 238.4,252.9 244.1,298.5 249.8,247.2 255.6,328.1 261.3,501.8 267.0,250.4 272.8,229.0 278.5,249.2 284.2,215.9 289.9,317.0 295.7,328.6 301.4,289.9 307.1,250.4 312.9,452.5 318.6,197.5 324.3,199.4 330.0,291.1 335.8,325.1 341.5,273.9 347.2,255.4 353.0,271.4 358.7,290.6 364.4,209.8 370.1,507.5 375.9,406.9 381.6,286.2 387.3,192.5 393.1,236.4 398.8,259.1 404.5,442.7 410.2,217.7 416.0,271.4 421.7,293.6 427.4,305.9 433.2,220.1 438.9,211.0 444.6,238.1 450.4,325.1 456.1,261.5 461.8,327.6" fill="none" stroke="#5b87d9" stroke-width="3" stroke-linejoin="miter" stroke-miterlimit="2.5"/><polyline points="123.8,384.7 129.5,321.9 135.3,259.1 141.0,406.9" fill="none" stroke="#c9524f" stroke-width="3" stroke-linejoin="miter" stroke-miterlimit="2.5"/><circle cx="141.0" cy="406.9" r="4.6" fill="#c9524f"/><circle cx="461.8" cy="327.6" r="4.6" fill="#5b87d9"/></svg>
</body></html>
